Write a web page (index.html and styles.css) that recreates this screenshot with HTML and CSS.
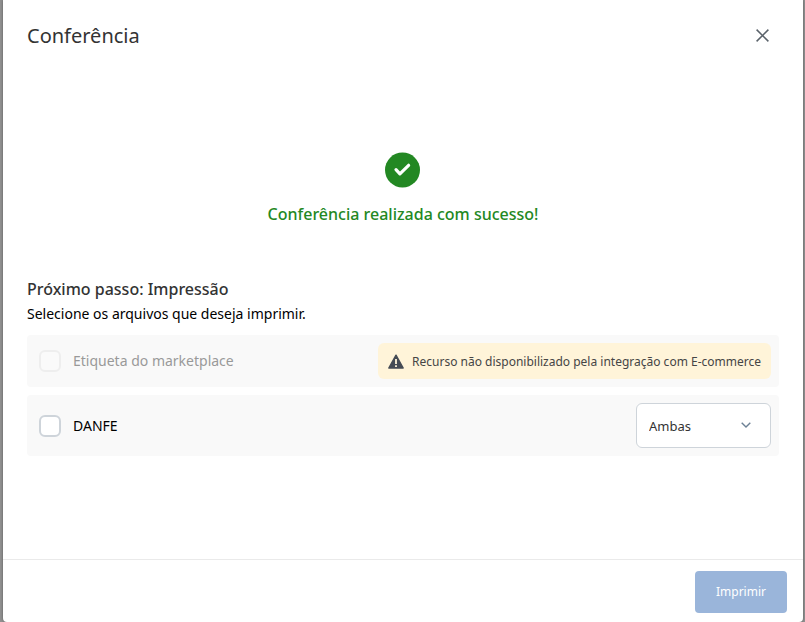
FILE: index.html
```html
<!DOCTYPE html>
<html lang="pt-BR">
<head>
<meta charset="utf-8">
<meta name="viewport" content="width=device-width, initial-scale=1">
<title>Conferência</title>
<link rel="stylesheet" href="styles.css">
</head>
<body>
<div class="modal" role="dialog" aria-labelledby="modal-title">
  <header class="modal-header">
    <h1 class="modal-title" id="modal-title">Conferência</h1>
    <button class="close" type="button" aria-label="Fechar">
      <svg width="14" height="14" viewBox="0 0 14 14" aria-hidden="true"><path d="M.6.6l11.800 11.800M12.400.6L.6 12.400" fill="none" stroke="#5a626a" stroke-width="1.5"/></svg>
    </button>
  </header>
  <main class="modal-body">
    <section class="success">
      <svg width="36" height="36" viewBox="0 0 36 36" aria-hidden="true"><circle cx="17.500" cy="18" r="17.500" fill="#238823"/><path d="M11 17.700l3.900 4.100 8.700-8.500" fill="none" stroke="#fff" stroke-width="3.200" stroke-linecap="round" stroke-linejoin="round"/></svg>
      <p class="success-text">Conferência realizada com sucesso!</p>
    </section>
    <section class="next">
      <h2 class="next-title">Próximo passo: Impressão</h2>
      <p class="next-text">Selecione os arquivos que deseja imprimir.</p>
      <div class="option">
        <input class="check" type="checkbox" id="etiqueta" disabled>
        <label class="option-label option-label-disabled" for="etiqueta">Etiqueta do marketplace</label>
        <div class="warning">
          <svg width="16" height="16" viewBox="0 0 16 16" aria-hidden="true"><path d="M8 1.200L15.200 14H.8z" fill="#454b54" stroke="#454b54" stroke-width="1.400" stroke-linejoin="round"/><path d="M8 5v5M8 11.200v1.800" stroke="#fff4d9" stroke-width="1.800"/></svg>
          <span>Recurso não disponibilizado pela integração com E-commerce</span>
        </div>
      </div>
      <div class="option">
        <input class="check" type="checkbox" id="danfe">
        <label class="option-label" for="danfe">DANFE</label>
        <div class="select-box">
          <select class="select" aria-label="Tipo de impressão da DANFE">
            <option>Ambas</option>
          </select>
          <svg class="chevron" width="10" height="6" viewBox="0 0 10 6" aria-hidden="true"><path d="M.7.7L5 5 9.300.7" fill="none" stroke="#6c8195" stroke-width="1.4"/></svg>
        </div>
      </div>
    </section>
  </main>
  <footer class="modal-footer">
    <button class="print" type="button" disabled>Imprimir</button>
  </footer>
</div>
</body>
</html>
```
FILE: styles.css
```css
* {
  box-sizing: border-box;
}

body {
  margin: 0;
  padding: 0 2px 0 3px;
  min-height: 100vh;
  display: flex;
  background: #919191;
  color: #000;
  font-family: "Noto Sans", sans-serif;
  font-size: 14px;
  line-height: 20px;
}

h1, h2, p {
  margin: 0;
}

button, select {
  font: inherit;
}

svg {
  display: block;
  flex: none;
}

.modal {
  flex: 1;
  display: flex;
  flex-direction: column;
  background: #fff;
  border-radius: 0 0 4px 4px;
  box-shadow: 0 0 3px rgba(0, 0, 0, 0.4);
}

.modal-header {
  display: flex;
  align-items: center;
  justify-content: space-between;
  padding: 20px 24px;
}

.modal-title {
  color: #333;
  font-size: 20px;
  font-weight: 400;
  line-height: 30px;
}

.close {
  padding: 9px;
  border: 0;
  background: none;
}

.modal-body {
  flex: 1;
  padding: 80px 24px 0;
}

.success {
  display: flex;
  flex-direction: column;
  align-items: center;
  gap: 16px;
}

.success-text {
  color: #238823;
  font-size: 16px;
  font-weight: 500;
  line-height: 20px;
}

.next {
  margin-top: 52px;
}

.next-title {
  color: #333;
  font-size: 16px;
  font-weight: 500;
  line-height: 26px;
}

.next-text {
  margin-top: 2px;
  margin-bottom: 11px;
}

.option {
  display: flex;
  align-items: center;
  gap: 12px;
  padding: 8px 8px 8px 12px;
  border-radius: 4px;
  background: #f9f9f9;
}

.option + .option {
  margin-top: 8px;
}

.check {
  appearance: none;
  width: 22px;
  height: 22px;
  margin: 0;
  border: 2px solid #ced4da;
  border-radius: 6px;
  background: #fff;
}

.check:disabled {
  border-color: #eee;
  background: #fafafa;
}

.option-label {
  flex: 1;
}

.option-label-disabled {
  color: #999;
}

.warning {
  display: flex;
  align-items: center;
  gap: 8px;
  padding: 9px 10px 7px;
  border-radius: 6px;
  background: #fff4d9;
  color: #454545;
  font-size: 12px;
}

.select-box {
  position: relative;
}

.select {
  appearance: none;
  width: 135px;
  height: 45px;
  padding: 0 32px 0 12px;
  border: 1px solid #ced4da;
  border-radius: 6px;
  background: #fff;
  color: #333;
  font-size: 13px;
}

.chevron {
  position: absolute;
  top: 19px;
  right: 20px;
  pointer-events: none;
}

.modal-footer {
  display: flex;
  justify-content: flex-end;
  padding: 11px 16px 9px;
  border-top: 1px solid #eaeaea;
}

.print {
  padding: 11px 21px;
  border: 0;
  border-radius: 4px;
  background: #9ab5da;
  color: #fff;
  font-size: 12px;
}
```
